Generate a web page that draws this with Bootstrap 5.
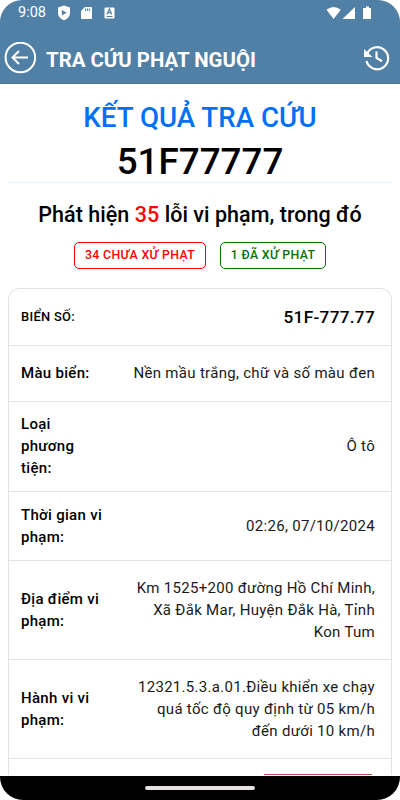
<!DOCTYPE html>
<html lang="vi">
<head>
<meta charset="utf-8">
<meta name="viewport" content="width=device-width, initial-scale=1">
<title>Tra cứu phạt nguội</title>
<link href="https://cdn.jsdelivr.net/npm/bootstrap@5.3.0/dist/css/bootstrap.min.css" rel="stylesheet">
<style>
body{font-family:Roboto,sans-serif;color:#000;background:#fff;overflow:hidden}
.screen{width:400px;height:800px;overflow:hidden}
.appbar{height:84px;background:#5080a6;border-bottom:1px solid #45779d;border-radius:22px 22px 0 0;color:#fff;flex:none}
.status{height:25px;padding:0 28px 0 18px}
.clock{font-size:14.5px;line-height:25px;width:39px}
.toolbar{height:58px;padding:7px 10px 0 4px}
.toolbar h1{font-size:20.4px;font-weight:700;line-height:26px;margin:5px 0 0 10px}
.result{margin:0 8px;height:99px;border-bottom:1px solid #dff8fc;flex:none}
.result h2{font-size:27.7px;font-weight:500;line-height:32px;color:#0070f8;margin:0;padding-top:18px}
.plate{font-size:36.8px;font-weight:500;line-height:42px;margin-top:7px}
.found{font-size:21.5px;font-weight:500;line-height:26px;margin-top:19px;letter-spacing:.04px}
.alert-count{color:#f00}
.pills{gap:14px;margin-top:14px}
.pill{height:27px;border:1px solid;border-radius:5px;font-size:12.3px;font-weight:500;line-height:24px;letter-spacing:.35px;text-align:center}
.pill-open{width:132px;color:#f00}
.pill-done{width:106px;color:#087308}
.details{margin:19px 8px 0;border:1px solid #e2e2e2;border-bottom:0;border-radius:12px 12px 0 0;flex:none;height:487px;overflow:hidden}
.item{border-bottom:1px solid #e5e5e5;padding:0 16px 0 12px;font-size:15px;line-height:22px;letter-spacing:.3px}
.item dt{font-weight:500}
.item dd{margin:0;text-align:right;font-weight:400;color:#1a1a1a}
.item .plate-label{font-size:12.9px}
.item .plate-value{font-size:17.2px;font-weight:500;color:#000}
.h57{height:57px}.h56{height:56px;padding-bottom:2px}.h90{height:90px;padding-bottom:2px}.h69{height:69px}.h99{height:99px}
.next-action{width:108px;height:1px;background:#b55353;margin:15px 19px 0 auto}
.navpill{height:24px;background:#000;border-radius:0 0 23px 23px;flex:none}
.navpill span{width:110px;height:4px;border-radius:2px;background:#e6e1e5}
</style>
</head>
<body>
<div class="screen d-flex flex-column">
<header class="appbar">
  <div class="status d-flex align-items-center">
    <span class="clock">9:08</span>
    <svg width="14" height="16" viewBox="0 0 14 16"><path fill="#fff" d="M7 .5 13 2.6V8c0 3.4-2.5 5.8-6 7.3C3.500 13.800 1 11.400 1 8V2.600z"/><path fill="#5080a6" d="M4.800 5v5.400L9.800 7.700z"/></svg>
    <svg width="13" height="14" viewBox="0 0 13 14" style="margin-left:9px"><path fill="#fff" d="M5 1h6q1 0 1 1v10q0 1-1 1H2q-1 0-1-1V5z"/><path stroke="#5080a6" d="M5.500 2.500V5M7.500 2.500V5M9.500 2.500V5"/></svg>
    <svg width="11" height="12" viewBox="0 0 11 12" style="margin-left:11px"><rect x=".5" y=".5" width="10" height="11" rx="1" fill="#fff"/><path fill="none" stroke="#5080a6" stroke-width="1.200" d="M3 7.500 5.300 2 7.700 7.500M3.700 5.700H7M2.500 9.500h6"/></svg>
    <svg class="ms-auto" width="46" height="14" viewBox="0 0 46 14"><path fill="#fff" d="M.5 3.800Q7.500-2 14.800 3.800L7.600 13zM29 1v12H16.500zM38 2h2V.5h3V2h2v11h-8V2z"/></svg>
  </div>
  <div class="toolbar d-flex align-items-center">
    <svg width="32" height="32" viewBox="0 0 32 32" fill="none" stroke="#fff" stroke-width="2"><circle cx="16.400" cy="15.500" r="14.800"/><path d="M24 15.500H9M15 9 8.500 15.500l6.500 6.500"/></svg>
    <h1>TRA CỨU PHẠT NGUỘI</h1>
    <svg class="ms-auto" width="27" height="26" viewBox="0 0 27 26"><path fill="none" stroke="#fff" stroke-width="2.200" d="M4 9A11 11 0 1 1 3.500 16M13.500 6.500v6.500l5.500 3.300"/><path fill="#fff" d="M1 4v8h8.500z"/></svg>
  </div>
</header>
<main class="d-flex flex-column flex-grow-1 overflow-hidden">
  <section class="result text-center"><h2>KẾT QUẢ TRA CỨU</h2><div class="plate">51F77777</div></section>
  <div class="found text-center">Phát hiện <span class="alert-count">35</span> lỗi vi phạm, trong đó</div>
  <div class="pills d-flex justify-content-center"><div class="pill pill-open">34 CHƯA XỬ PHẠT</div><div class="pill pill-done">1 ĐÃ XỬ PHẠT</div></div>
  <dl class="details mb-0">
    <div class="item h57 d-flex justify-content-between align-items-center"><dt class="plate-label">BIỂN SỐ:</dt><dd class="plate-value">51F-777.77</dd></div>
    <div class="item h56 d-flex justify-content-between align-items-center"><dt>Màu biển:</dt><dd>Nền mầu trắng, chữ và số màu đen</dd></div>
    <div class="item h90 d-flex justify-content-between align-items-center"><dt>Loại<br>phương<br>tiện:</dt><dd>Ô tô</dd></div>
    <div class="item h69 d-flex justify-content-between align-items-center"><dt>Thời gian vi<br>phạm:</dt><dd>02:26, 07/10/2024</dd></div>
    <div class="item h99 d-flex justify-content-between align-items-center"><dt>Địa điểm vi<br>phạm:</dt><dd>Km 1525+200 đường Hồ Chí Minh,<br>Xã Đắk Mar, Huyện Đắk Hà, Tỉnh<br>Kon Tum</dd></div>
    <div class="item h99 d-flex justify-content-between align-items-center"><dt>Hành vi vi<br>phạm:</dt><dd>12321.5.3.a.01.Điều khiển xe chạy<br>quá tốc độ quy định từ 05 km/h<br>đến dưới 10 km/h</dd></div>
    <div class="next-action"></div>
  </dl>
</main>
<footer class="navpill d-flex justify-content-center align-items-center"><span></span></footer>
</div>
<script src="https://cdn.jsdelivr.net/npm/bootstrap@5.3.0/dist/js/bootstrap.bundle.min.js"></script>
</body>
</html>
